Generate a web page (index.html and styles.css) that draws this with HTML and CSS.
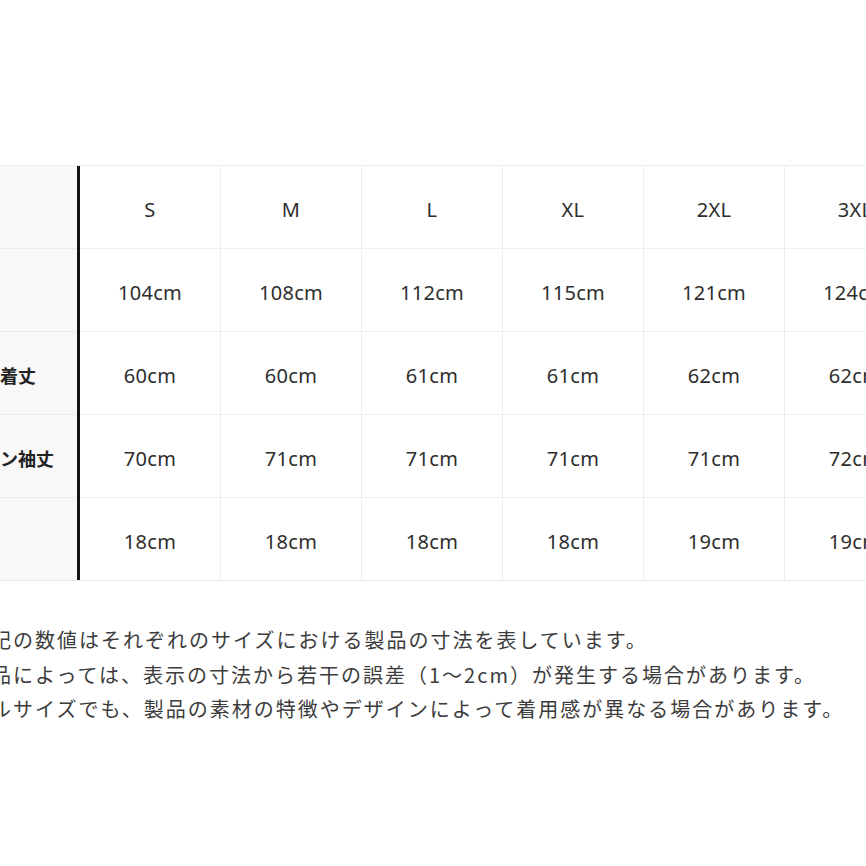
FILE: index.html
```html
<!DOCTYPE html>
<html lang="ja">
<head>
<meta charset="utf-8">
<title>サイズ表</title>
<link rel="stylesheet" href="styles.css">
</head>
<body>
<div class="page">
  <div class="chart">
    <div class="labels">
      <div class="lab">サイズ</div>
      <div class="lab">身幅</div>
      <div class="lab">後中心着丈</div>
      <div class="lab">ラグラン袖丈</div>
      <div class="lab">袖口幅</div>
    </div>
    <div class="grid">
      <div class="cell">S</div><div class="cell">M</div><div class="cell">L</div><div class="cell">XL</div><div class="cell">2XL</div><div class="cell">3XL</div>
      <div class="cell">104cm</div><div class="cell">108cm</div><div class="cell">112cm</div><div class="cell">115cm</div><div class="cell">121cm</div><div class="cell">124cm</div>
      <div class="cell">60cm</div><div class="cell">60cm</div><div class="cell">61cm</div><div class="cell">61cm</div><div class="cell">62cm</div><div class="cell">62cm</div>
      <div class="cell">70cm</div><div class="cell">71cm</div><div class="cell">71cm</div><div class="cell">71cm</div><div class="cell">71cm</div><div class="cell">72cm</div>
      <div class="cell">18cm</div><div class="cell">18cm</div><div class="cell">18cm</div><div class="cell">18cm</div><div class="cell">19cm</div><div class="cell">19cm</div>
    </div>
  </div>
  <div class="notes">
    <p class="note">上記の数値はそれぞれのサイズにおける製品の寸法を表しています。</p>
    <p class="note">製品によっては、表示の寸法から若干の誤差（1～2cm）が発生する場合があります。</p>
    <p class="note note-shift">モデルサイズでも、製品の素材の特徴やデザインによって着用感が異なる場合があります。</p>
  </div>
</div>
</body>
</html>
```

FILE: styles.css
```css
html, body {
  margin: 0;
  padding: 0;
  background: #ffffff;
}

.page {
  width: 866px;
  height: 866px;
  overflow: hidden;
  padding-top: 165px;
  box-sizing: border-box;
}

.chart {
  display: flex;
  width: max-content;
  border-top: 1px solid #ececec;
  border-bottom: 1px solid #ececec;
}

.labels {
  width: 77px;
  display: grid;
  grid-template-rows: repeat(5, 82px);
  row-gap: 1px;
  background: #ececec;
  border-right: 3px solid #141414;
}

.lab {
  background: #f8f8f8;
  overflow: hidden;
  white-space: nowrap;
  text-indent: -54px;
  display: flex;
  align-items: center;
  padding-top: 4px;
  box-sizing: border-box;
  font-family: "Noto Sans CJK JP", "Noto Sans", sans-serif;
  font-weight: 700;
  font-size: 18px;
  color: #222222;
}

.grid {
  display: grid;
  grid-template-columns: repeat(6, 140px);
  grid-auto-rows: 82px;
  gap: 1px;
  background: #eeeeee;
}

.cell {
  background: #ffffff;
  display: flex;
  align-items: center;
  justify-content: center;
  padding-top: 5px;
  box-sizing: border-box;
  font-family: "Noto Sans", sans-serif;
  font-size: 20px;
  letter-spacing: 0.3px;
  color: #2e2e2e;
}

.notes {
  margin-top: 42px;
  margin-left: -31px;
}

.note {
  margin: 0;
  white-space: nowrap;
  font-family: "Noto Sans CJK JP", sans-serif;
  font-size: 20px;
  letter-spacing: 2px;
  line-height: 34.5px;
  color: #3c3c3c;
}

.note-shift {
  text-indent: -22px;
}
```
